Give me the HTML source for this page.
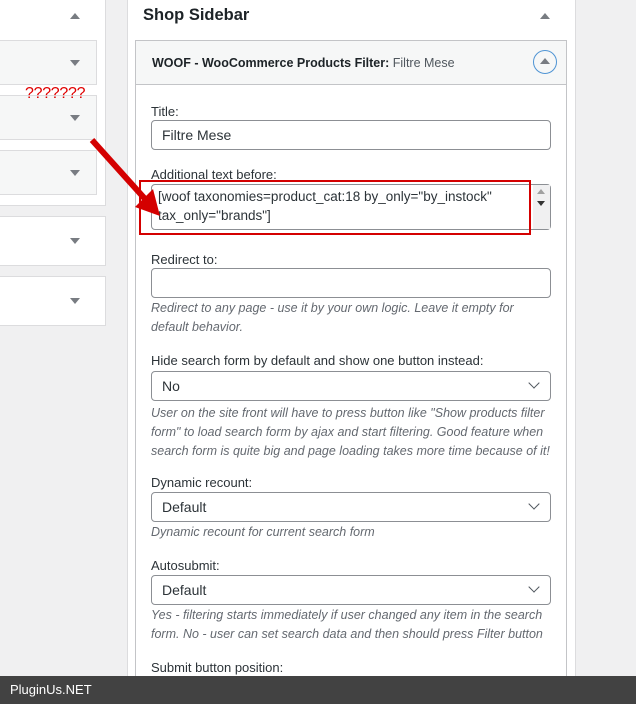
<!DOCTYPE html>
<html><head><meta charset="utf-8"><style>
*{box-sizing:border-box;margin:0;padding:0}
html,body{width:636px;height:704px;overflow:hidden}
body{background:#f0f0f1;font-family:"Liberation Sans",sans-serif;font-size:13px;color:#1d2327;position:relative}
.abs{position:absolute}
.wbox{position:absolute;background:#fff;border:1px solid #dcdcde}
.inner{position:absolute;background:#f6f7f7;border:1px solid #dcdcde}
.tri{position:absolute;width:0;height:0;border-left:5px solid transparent;border-right:5px solid transparent}
.dn{border-top:6px solid #787c82}
.up{border-bottom:6px solid #787c82}
.lbl{position:absolute;left:151px;font-size:13px;color:#2c3338}
.inp{position:absolute;left:151px;width:400px;height:30px;border:1px solid #8c8f94;border-radius:4px;background:#fff;padding:0 10px;line-height:28px;font-size:14px;color:#2c3338}
.desc{position:absolute;left:151px;width:400px;font-size:12.5px;font-style:italic;color:#646970;line-height:19px}
.chev{position:absolute;right:12px;top:7px;width:8px;height:8px;border-right:1.6px solid #50575e;border-bottom:1.6px solid #50575e;transform:rotate(45deg)}
</style></head><body>
<div class="wbox" style="left:-1px;top:-1px;width:107px;height:207px"></div>
<div class="tri up" style="left:70px;top:13px"></div>
<div class="inner" style="left:-1px;top:40px;width:98px;height:45px"></div>
<div class="tri dn" style="left:70px;top:60px"></div>
<div class="inner" style="left:-1px;top:95px;width:98px;height:45px"></div>
<div class="tri dn" style="left:70px;top:115px"></div>
<div class="inner" style="left:-1px;top:150px;width:98px;height:45px"></div>
<div class="tri dn" style="left:70px;top:170px"></div>
<div class="wbox" style="left:-1px;top:216px;width:107px;height:50px"></div>
<div class="tri dn" style="left:70px;top:238px"></div>
<div class="wbox" style="left:-1px;top:276px;width:107px;height:50px"></div>
<div class="tri dn" style="left:70px;top:298px"></div>
<div class="abs" style="left:25px;top:85px;color:#e00000;font-size:16px;letter-spacing:-0.3px">???????</div>

<div class="abs" style="left:127px;top:-1px;width:449px;height:705px;background:#fff;border-right:1px solid #dcdcde;border-left:1px solid #dcdcde"></div>
<div class="abs" style="left:143px;top:6px;font-size:16.5px;font-weight:bold;color:#1d2327">Shop Sidebar</div>
<div class="tri up" style="left:540px;top:13px"></div>
<div class="abs" style="left:135px;top:40px;width:432px;height:665px;border:1px solid #c3c4c7;background:#fff"></div>
<div class="abs" style="left:135px;top:40px;width:432px;height:45px;border:1px solid #c3c4c7;background:#f6f7f7"></div>
<div class="abs" style="left:152px;top:56px;font-size:12.5px;font-weight:bold;color:#1d2327">WOOF - WooCommerce Products Filter: <span style="font-weight:normal;color:#50575e">Filtre Mese</span></div>
<div class="abs" style="left:533px;top:50px;width:24px;height:24px;border:1.5px solid #4f94d4;border-radius:50%"></div>
<div class="tri up" style="left:540px;top:58px"></div>

<div class="lbl" style="top:104px">Title:</div>
<div class="inp" style="top:120px">Filtre Mese</div>
<div class="lbl" style="top:167px">Additional text before:</div>
<div class="inp" style="top:184px;height:46px;line-height:19px;padding:2px 20px 0 6px;font-size:13.5px">[woof taxonomies=product_cat:18 by_only="by_instock" tax_only="brands"]</div>
<div class="abs" style="left:533px;top:185px;width:17px;height:44px;background:#f0f0f1"></div>
<div class="tri up" style="left:537px;top:189px;border-bottom-color:#a0a0a0;border-left-width:4px;border-right-width:4px;border-bottom-width:5px"></div>
<div class="tri dn" style="left:537px;top:201px;border-top-color:#333;border-left-width:4px;border-right-width:4px;border-top-width:5px"></div>
<div class="abs" style="left:139px;top:180px;width:392px;height:55px;border:2px solid #d40000"></div>

<div class="lbl" style="top:252px">Redirect to:</div>
<div class="inp" style="top:268px"></div>
<div class="desc" style="top:299px">Redirect to any page - use it by your own logic. Leave it empty for default behavior.</div>
<div class="lbl" style="top:353px">Hide search form by default and show one button instead:</div>
<div class="inp" style="top:371px">No<span class="chev"></span></div>
<div class="desc" style="top:404px">User on the site front will have to press button like "Show products filter form" to load search form by ajax and start filtering. Good feature when search form is quite big and page loading takes more time because of it!</div>
<div class="lbl" style="top:475px">Dynamic recount:</div>
<div class="inp" style="top:492px">Default<span class="chev"></span></div>
<div class="desc" style="top:523px">Dynamic recount for current search form</div>
<div class="lbl" style="top:558px">Autosubmit:</div>
<div class="inp" style="top:575px">Default<span class="chev"></span></div>
<div class="desc" style="top:606px">Yes - filtering starts immediately if user changed any item in the search form. No - user can set search data and then should press Filter button</div>
<div class="lbl" style="top:660px">Submit button position:</div>

<svg class="abs" style="left:0;top:0" width="636" height="704"><line x1="92" y1="140" x2="146" y2="200" stroke="#d40000" stroke-width="6"/><polygon points="160,216 135,207 153,189" fill="#d40000"/></svg>

<div class="abs" style="left:0;top:676px;width:636px;height:28px;background:#424242;color:#fff;font-size:13px;padding:6px 10px">PluginUs.NET</div>
</body></html>
